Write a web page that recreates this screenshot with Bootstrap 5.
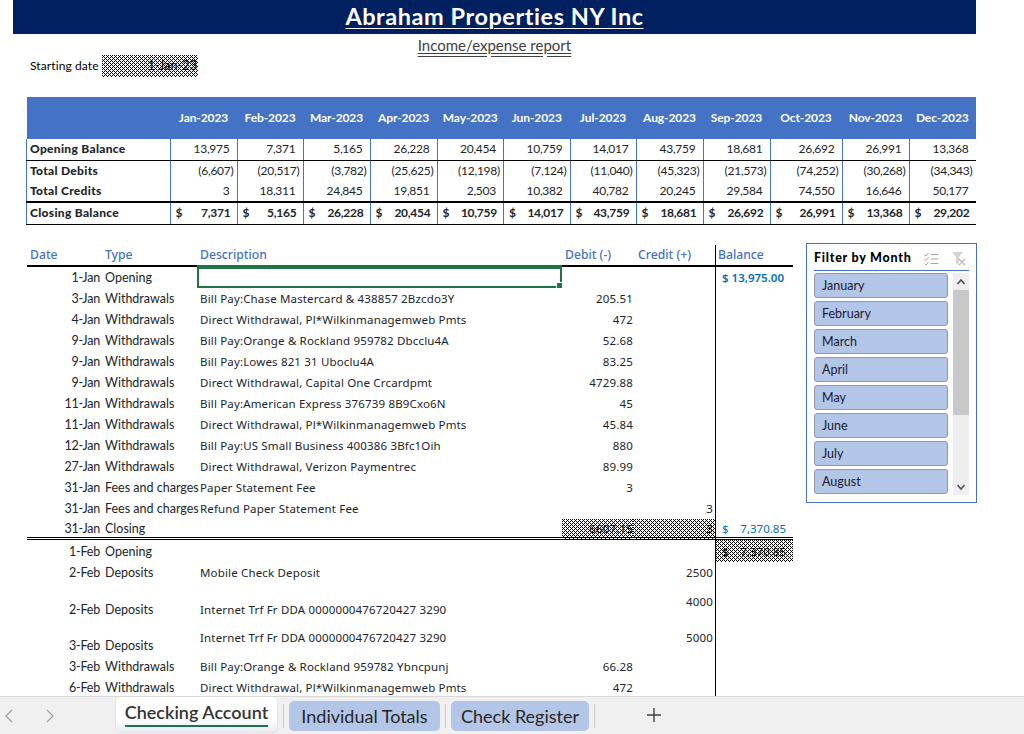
<!DOCTYPE html>
<html lang="en">
<head>
    <meta charset="UTF-8">
    <title>Checking Account</title>
    <link href="https://cdn.jsdelivr.net/npm/bootstrap@5.3.0/dist/css/bootstrap.min.css" rel="stylesheet">
    <style>
        html, body { height: 734px; overflow: hidden; background: #fff; }
        body { font-family: Lato, "Liberation Sans", sans-serif; font-size: 12px; color: #000; }

        .sheet { height: 696px; overflow: hidden; }
        .title-bar { margin-left: 13px; width: 963px; height: 34px; background: #002060; color: #fff; font-size: 23.5px; letter-spacing: .55px; font-weight: 700; line-height: 33px; text-decoration: underline; text-decoration-thickness: 1px; text-underline-offset: 3px; }
        .sub-title { height: 21px; margin-left: 13px; width: 963px; font-size: 15px; line-height: 23px; color: #404040; text-decoration: underline double; text-underline-offset: 2px; }
        .start-row { height: 42px; padding-left: 30px; font-size: 12px; letter-spacing: .1px; line-height: 22px; }
        .start-label { width: 69px; }
        .dither { background: #fff url("data:image/svg+xml,%3Csvg xmlns='http://www.w3.org/2000/svg' width='4' height='4' shape-rendering='crispEdges'%3E%3Cpath d='M0 0h1v1H0zM2 0h1v1H2zM1 1h1v1H1zM0 2h1v1H0zM2 2h1v1H2zM3 3h1v1H3z'/%3E%3C/svg%3E") 0 0 / 4px 4px; }
        .start-date { width: 96px; height: 22px; margin-left: 3px; text-align: right; padding-right: 1px; font-size: 12.5px; }

        .summary-wrap { height: 128px; }
        .summary { margin: 0; margin-left: 26px; width: 949px; table-layout: fixed; }
        .summary > :not(caption) > * > * { padding: 0 4px; border: 0; background: transparent; line-height: 20px; white-space: nowrap; }
        .summary thead th { background: #4472c4; color: #fff; font-size: 12px; letter-spacing: -.1px; font-weight: 700; height: 42px; vertical-align: middle; text-align: center; padding: 0; }
        .summary tbody td { font-size: 12px; letter-spacing: -.25px; text-align: right; border-left: 1px solid #4472c4; height: 21px; padding: 0 7px 0 0; }
        .summary tbody td.neg { padding-right: 3px; }
        .summary tbody td:first-child { text-align: left; font-weight: 900; font-size: 12px; letter-spacing: .3px; padding-left: 3px; border-left: 1px solid #4472c4; }
        .summary tr.rule-b > * { border-bottom: 1px solid #000; }
        .summary tr.rule-heavy > * { border-bottom: 2px solid #000; }
        .summary tr.rule-close > * { font-weight: 700; border-bottom: 1px solid #000; height: 22px; padding-right: 6px; }
        .summary td .money { display: flex; justify-content: space-between; padding-left: 5px; font-weight: 700; }
        .gap-row { height: 20px; }

        .ledger-wrap { align-items: flex-start; padding-left: 27px; }
        .ledger { margin: 0; width: 766px; table-layout: fixed; border-collapse: separate; border-spacing: 0; }
        .ledger > :not(caption) > * > * { padding: 0; border: 0; background: transparent; white-space: nowrap; height: 21px; line-height: 18px; vertical-align: middle; box-shadow: none; }
        .ledger .col-bal { border-left: 1px solid #000; }
        .ledger thead th { height: 22px; padding: 0 0 0 3px; color: #4472c4; font-family: "Noto Sans", sans-serif; font-size: 12.2px; font-weight: 500; border-bottom: 2px solid #000; }
        .ledger thead th.th-type { padding-left: 0; }
        .ledger thead th.th-bal { padding-left: 2px; }
        .ledger thead th.pe-4 { padding-right: 24px; }
        .ledger .date-cell { text-align: right; padding-right: 5px; font-size: 12.5px; letter-spacing: -.2px; }
        .ledger .type-cell { font-size: 12.5px; }
        .ledger .desc-cell { font-family: "Noto Sans", sans-serif; font-size: 11.5px; letter-spacing: .16px; padding-left: 3px; }
        .ledger .num-cell { font-family: "Noto Sans", sans-serif; font-size: 11.5px; letter-spacing: .16px; text-align: right; }
        .ledger .debit-cell { padding-right: 0; }
        .ledger .credit-cell { padding-right: 2px; }
        .ledger .bal-cell { font-family: "Noto Sans", sans-serif; font-size: 11.5px; color: #0070c0; padding: 2px 7px 0 6px; }
        .ledger .bal-cell .money { display: flex; justify-content: space-between; }
        .ledger td.active-cell { position: relative; border: 2px solid #217346; box-shadow: 0 -2px 0 #217346; }
        .active-cell::after { content: ""; position: absolute; right: -3px; bottom: -3px; width: 5px; height: 5px; background: #217346; border: 1px solid #fff; box-sizing: content-box; }
        .ledger tr.opening-row > * { padding-top: 0; }
        .ledger tr.closing > * { border-bottom: 3px double #000; padding-top: 2px; line-height: 16px; }
        .ledger tr.after-close > * { height: 22px; padding-top: 2px; }
        .ledger tr.tall-a > * { height: 36px; }
        .ledger tr.tall-b > * { height: 37px; }
        .ledger td.to-top { vertical-align: top; padding-top: 10px; }
        .ledger td.to-bot { vertical-align: bottom; padding-top: 0; }
        .ledger tr.tall-b td.to-bot { padding-bottom: 1px; }
        .ledger td.dither { background: #fff url("data:image/svg+xml,%3Csvg xmlns='http://www.w3.org/2000/svg' width='4' height='4' shape-rendering='crispEdges'%3E%3Cpath d='M0 0h1v1H0zM2 0h1v1H2zM1 1h1v1H1zM0 2h1v1H0zM2 2h1v1H2zM3 3h1v1H3z'/%3E%3C/svg%3E") 0 0 / 4px 4px; color: #000; }

        .slicer { width: 171px; height: 260px; margin-left: 13px; margin-top: -2px; border: 1px solid #4472c4; padding: 0 7px; }
        .slicer-head { height: 27px; padding-top: 3px; border-bottom: 1px solid #4472c4; font-weight: 900; font-size: 12.5px; letter-spacing: .75px; }
        .slicer-icons { gap: 13px; padding-right: 3px; }
        .slicer-body { gap: 5px; padding-top: 2px; }
        .slicer-items { width: 134px; gap: 3px; }
        .slicer-btn { height: 25px; background: #b4c6e7; border: 1px solid #8d99ae; border-radius: 3px; padding: 0 7px; line-height: 24px; font-size: 12.5px; color: #1a1a2e; }
        .slicer-track { width: 16px; height: 222px; background: #eee; }
        .slicer-thumb { height: 125px; background: #c8c8c8; }

        .tab-bar { height: 38px; background: #f0f0f0; border-top: 1px solid #d9d9d9; }
        .tab-nav { width: 115px; padding-left: 3px; gap: 29px; }
        .sheet-tab { font-size: 18px; line-height: 30px; height: 30px; margin-top: 4px; border-radius: 5px; background: #b4c6e7; color: #262626; text-align: center; }
        .tab-on { width: 163px; height: 36px; margin-top: 0; background: linear-gradient(#fff 60%, #e8edf7); border: 1px solid #e2e2e2; border-top: 0; font-weight: 600; line-height: 31px; position: relative; color: #333; }
        .tab-on::after { content: ""; position: absolute; left: 9px; right: 9px; bottom: 5px; height: 2px; background: #217346; }
        .tab-sep { width: 1px; height: 24px; background: #c8c8c8; margin: 7px 5px 0; }
        .tab-add { margin: 10px 0 0 46px; }
    </style>
</head>
<body>
    <div class="sheet">
        <div class="title-bar text-center">Abraham Properties NY Inc</div>
        <div class="sub-title text-center">Income/expense report</div>
        <div class="start-row d-flex align-items-start">
            <span class="start-label text-nowrap">Starting date</span>
            <div class="start-date dither">1-Jan-23</div>
        </div>

        <div class="summary-wrap">
        <table class="table summary">
            <colgroup>
                <col style="width:143.5px"><col style="width:67px"><col style="width:66px"><col style="width:67px"><col style="width:67px"><col style="width:66.5px"><col style="width:66.5px"><col style="width:66px"><col style="width:67px"><col style="width:67px"><col style="width:72px"><col style="width:67px"><col style="width:66.5px">
            </colgroup>
            <thead>
                <tr><th></th><th>Jan-2023</th><th>Feb-2023</th><th>Mar-2023</th><th>Apr-2023</th><th>May-2023</th><th>Jun-2023</th><th>Jul-2023</th><th>Aug-2023</th><th>Sep-2023</th><th>Oct-2023</th><th>Nov-2023</th><th>Dec-2023</th></tr>
            </thead>
            <tbody id="summaryBody"></tbody>
        </table>
        </div>
        <div class="gap-row"></div>

        <div class="ledger-wrap d-flex">
            <table class="table ledger">
                <colgroup>
                    <col style="width:78px"><col style="width:92px"><col style="width:365px"><col style="width:71px"><col style="width:82px"><col style="width:78px">
                </colgroup>
                <thead>
                    <tr>
                        <th>Date</th><th class="th-type">Type</th><th>Description</th>
                        <th>Debit (-)</th><th class="text-end pe-4">Credit (+)</th><th class="col-bal th-bal">Balance</th>
                    </tr>
                </thead>
                <tbody id="ledgerBody"></tbody>
            </table>

            <div class="slicer flex-shrink-0">
                <div class="slicer-head d-flex align-items-center justify-content-between">
                    <span>Filter by Month</span>
                    <span class="slicer-icons d-flex align-items-center">
                        <svg width="15" height="14" viewBox="0 0 15 14" fill="none" stroke="#a6a6a6">
                            <path d="M0.5 2.5l1.5 1.5 2.5-3M0.5 7l1.5 1.5 2.5-3M0.5 11.5l1.5 1.5 2.5-3"/>
                            <path d="M6.5 2.5h8M6.5 7h8M6.5 11.5h8"/>
                        </svg>
                        <svg width="14" height="15" viewBox="0 0 14 15">
                            <path d="M0 1h11L7 6v6l-3 2V6z" fill="#d4d4d4"/>
                            <path d="M7 8l6 6M13 8l-6 6" stroke="#bdbdbd" stroke-width="1.4"/>
                        </svg>
                    </span>
                </div>
                <div class="slicer-body d-flex">
                    <div class="slicer-items d-flex flex-column" id="slicerItems"></div>
                    <div class="slicer-track d-flex flex-column">
                        <svg width="16" height="17" viewBox="0 0 16 17" fill="none" stroke="#505050" stroke-width="1.6"><path d="M4.5 11l3.5-4 3.5 4"/></svg>
                        <div class="slicer-thumb"></div>
                        <svg class="mt-auto" width="16" height="17" viewBox="0 0 16 17" fill="none" stroke="#505050" stroke-width="1.6"><path d="M4.5 7l3.5 4 3.5-4"/></svg>
                    </div>
                </div>
            </div>
        </div>
    </div>

    <div class="tab-bar d-flex">
        <div class="tab-nav d-flex align-items-center">
            <svg width="12" height="16" viewBox="0 0 12 16" fill="none" stroke="#a0a0a0" stroke-width="1.2"><path d="M9 2L3 8l6 6"/></svg>
            <svg width="12" height="16" viewBox="0 0 12 16" fill="none" stroke="#a0a0a0" stroke-width="1.2"><path d="M3 2l6 6-6 6"/></svg>
        </div>
        <div class="sheet-tab tab-on">Checking Account</div>
        <div class="tab-sep"></div>
        <div class="sheet-tab" style="width:151px">Individual Totals</div>
        <div class="tab-sep"></div>
        <div class="sheet-tab" style="width:138px">Check Register</div>
        <div class="tab-sep"></div>
        <svg class="tab-add" width="16" height="16" viewBox="0 0 16 16" stroke="#404040" stroke-width="1.4"><path d="M8 1v14M1 8h14"/></svg>
    </div>

    <script>
        // figures per month, Jan to Dec
        var opening = ['13,975','7,371','5,165','26,228','20,454','10,759','14,017','43,759','18,681','26,692','26,991','13,368'];
        var debits = ['(6,607)','(20,517)','(3,782)','(25,625)','(12,198)','(7,124)','(11,040)','(45,323)','(21,573)','(74,252)','(30,268)','(34,343)'];
        var credits = ['3','18,311','24,845','19,851','2,503','10,382','40,782','20,245','29,584','74,550','16,646','50,177'];
        var closing = ['7,371','5,165','26,228','20,454','10,759','14,017','43,759','18,681','26,692','26,991','13,368','29,202'];

        function cells(list, cls) {
            return list.map(function (v) { return '<td class="' + (cls || '') + '">' + v + '</td>'; }).join('');
        }
        function moneyCells(list) {
            return list.map(function (v) { return '<td><div class="money"><span>$</span><span>' + v + '</span></div></td>'; }).join('');
        }
        document.getElementById('summaryBody').innerHTML =
            '<tr class="rule-b"><td>Opening Balance</td>' + cells(opening) + '</tr>' +
            '<tr><td>Total Debits</td>' + cells(debits, 'neg') + '</tr>' +
            '<tr class="rule-heavy"><td>Total Credits</td>' + cells(credits) + '</tr>' +
            '<tr class="rule-close"><td>Closing Balance</td>' + moneyCells(closing) + '</tr>';

        // date, type, description, debit, credit
        var rows = [
            ['3-Jan','Withdrawals','Bill Pay:Chase Mastercard &amp; 438857 2Bzcdo3Y','205.51',''],
            ['4-Jan','Withdrawals','Direct Withdrawal, Pl*Wilkinmanagemweb Pmts','472',''],
            ['9-Jan','Withdrawals','Bill Pay:Orange &amp; Rockland 959782 Dbcclu4A','52.68',''],
            ['9-Jan','Withdrawals','Bill Pay:Lowes 821 31 Uboclu4A','83.25',''],
            ['9-Jan','Withdrawals','Direct Withdrawal, Capital One Crcardpmt','4729.88',''],
            ['11-Jan','Withdrawals','Bill Pay:American Express 376739 8B9Cxo6N','45',''],
            ['11-Jan','Withdrawals','Direct Withdrawal, Pl*Wilkinmanagemweb Pmts','45.84',''],
            ['12-Jan','Withdrawals','Bill Pay:US Small Business 400386 3Bfc1Oih','880',''],
            ['27-Jan','Withdrawals','Direct Withdrawal, Verizon Paymentrec','89.99',''],
            ['31-Jan','Fees and charges','Paper Statement Fee','3',''],
            ['31-Jan','Fees and charges','Refund Paper Statement Fee','','3']
        ];
        function row(r) {
            return '<tr><td class="date-cell">' + r[0] + '</td><td class="type-cell">' + r[1] + '</td><td class="desc-cell">' + r[2] +
                '</td><td class="num-cell debit-cell">' + r[3] + '</td><td class="num-cell credit-cell">' + r[4] + '</td><td class="col-bal"></td></tr>';
        }
        var html = '<tr class="opening-row"><td class="date-cell">1-Jan</td><td class="type-cell">Opening</td><td class="active-cell"></td><td></td><td></td><td class="col-bal bal-cell fw-semibold">$ 13,975.00</td></tr>';
        html += rows.map(row).join('');
        html += '<tr class="closing"><td class="date-cell">31-Jan</td><td class="type-cell">Closing</td><td></td><td class="num-cell debit-cell dither">6607.15</td><td class="num-cell credit-cell dither">3</td><td class="col-bal bal-cell"><div class="money"><span>$</span><span>7,370.85</span></div></td></tr>';
        html += '<tr class="after-close"><td class="date-cell">1-Feb</td><td class="type-cell">Opening</td><td></td><td></td><td></td><td class="col-bal bal-cell dither"><div class="money"><span>$</span><span>7,370.85</span></div></td></tr>';
        html += row(['2-Feb','Deposits','Mobile Check Deposit','','2500']);
        html += '<tr class="tall-a"><td class="date-cell to-bot">2-Feb</td><td class="type-cell to-bot">Deposits</td><td class="desc-cell to-bot">Internet Trf Fr DDA 0000000476720427 3290</td><td></td><td class="num-cell credit-cell to-top">4000</td><td class="col-bal"></td></tr>';
        html += '<tr class="tall-b"><td class="date-cell to-bot">3-Feb</td><td class="type-cell to-bot">Deposits</td><td class="desc-cell to-top">Internet Trf Fr DDA 0000000476720427 3290</td><td></td><td class="num-cell credit-cell to-top">5000</td><td class="col-bal"></td></tr>';
        html += row(['3-Feb','Withdrawals','Bill Pay:Orange &amp; Rockland 959782 Ybncpunj','66.28','']);
        html += row(['6-Feb','Withdrawals','Direct Withdrawal, Pl*Wilkinmanagemweb Pmts','472','']);
        document.getElementById('ledgerBody').innerHTML = html;

        var months = ['January','February','March','April','May','June','July','August'];
        document.getElementById('slicerItems').innerHTML = months.map(function (m) {
            return '<div class="slicer-btn">' + m + '</div>';
        }).join('');
    </script>
    <script src="https://cdn.jsdelivr.net/npm/bootstrap@5.3.0/dist/js/bootstrap.bundle.min.js"></script>
</body>
</html>
